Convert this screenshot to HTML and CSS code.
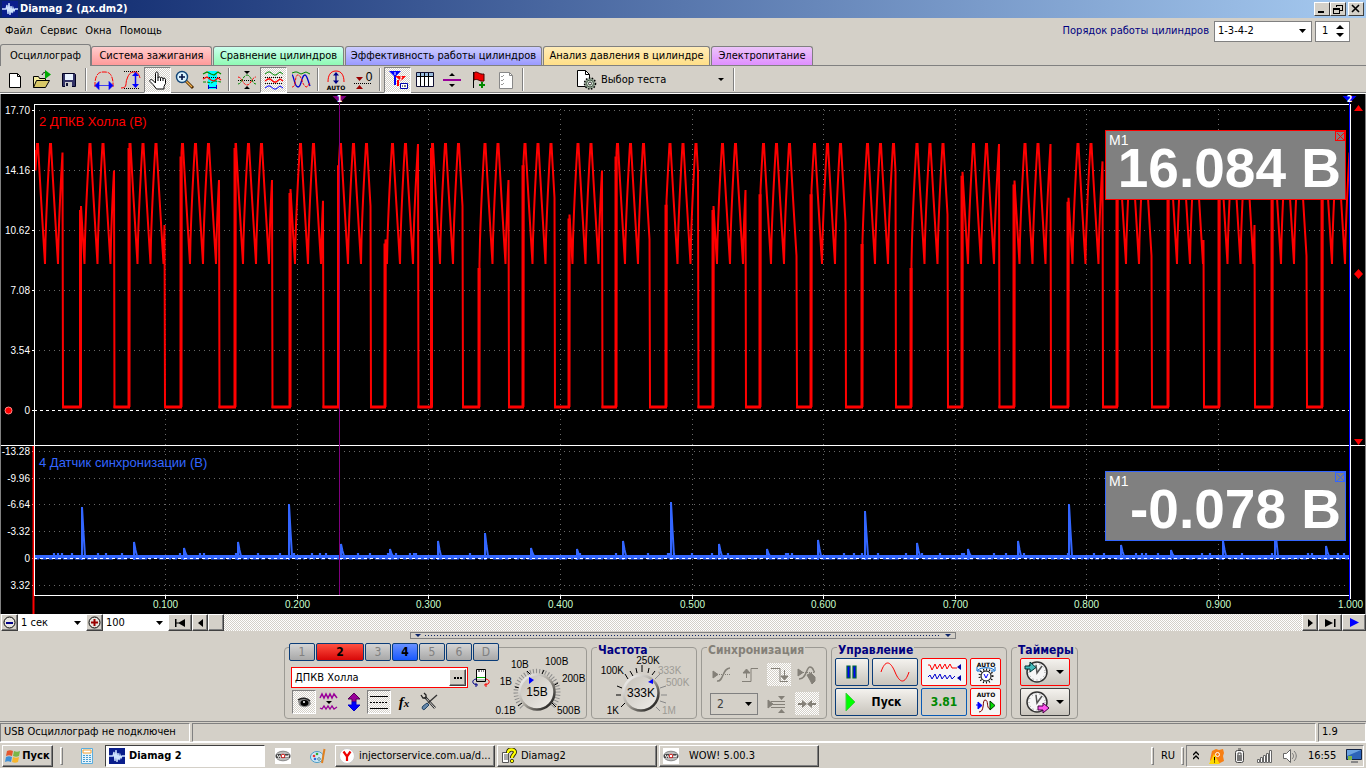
FILE: index.html
```html
<!DOCTYPE html>
<html lang="ru">
<head>
<meta charset="utf-8">
<title>Diamag 2 (дх.dm2)</title>
<link rel="stylesheet" href="styles.css">
</head>
<body>
<svg width="0" height="0" class="defs" aria-hidden="true">
  <defs>
    <symbol id="app" viewBox="0 0 16 16"><rect width="16" height="16" fill="#0a1e8c"/><path d="M0 8h4l1-4 1 9 1-11 1 12 1-9 1 7 1-5 1 3 1-2h3" fill="none" stroke="#cfe4ff" stroke-width="1.3"/></symbol>
    <symbol id="wow" viewBox="0 0 16 16"><rect width="16" height="16" fill="#fff"/><ellipse cx="8" cy="8" rx="7.3" ry="4.8" fill="#bbb" stroke="#888"/><path d="M1 6h14v4H1z" fill="#444"/><path d="M2 6.500l1.500 3 1-2 1 2 1-3M9.500 6.500l1.500 3 1-2 1 2 1-3" stroke="#eee" fill="none"/><circle cx="8" cy="8" r="1.800" fill="#fff" stroke="#d22"/></symbol>
    <linearGradient id="steel" x1="0" y1="0" x2="1" y2="1"><stop offset="0" stop-color="#fff"/><stop offset=".5" stop-color="#a8a49c"/><stop offset="1" stop-color="#000"/></linearGradient>
    <linearGradient id="face" x1="0" y1="0" x2="1" y2="1"><stop offset="0" stop-color="#c4c0b8"/><stop offset="1" stop-color="#f0eeea"/></linearGradient>
  </defs>
</svg>

<header class="titlebar">
  <svg width="16" height="16"><use href="#app"/></svg>
  <h1>Diamag 2 (дх.dm2)</h1>
  <button class="winbtn" aria-label="Свернуть"><svg width="12" height="10"><path d="M2 7h6v2H2z"/></svg></button>
  <button class="winbtn" aria-label="Восстановить"><svg width="12" height="10" fill="none" stroke="#000" shape-rendering="crispEdges"><path d="M4 3V1h6v5H8M4 1h6M1 4h6v5H1zM1 5h6"/></svg></button>
  <button class="winbtn close" aria-label="Закрыть"><svg width="12" height="10"><path d="M2 1l7 7M9 1L2 8" stroke="#000" stroke-width="1.600"/></svg></button>
</header>

<div class="menubar">
  <nav><a href="#">Файл</a><a href="#">Сервис</a><a href="#">Окна</a><a href="#">Помощь</a></nav>
  <label class="order" for="order">Порядок работы цилиндров</label>
  <select id="order" class="combo order-select"><option>1-3-4-2</option></select>
  <div class="spin">
    <input type="text" value="1" aria-label="Номер цилиндра">
    <svg width="10" height="14"><path d="M1 5h8L5 1zM1 9h8l-4 4z"/></svg>
  </div>
</div>

<nav class="tabs">
  <button class="tab active">Осциллограф</button>
  <button class="tab red">Система зажигания</button>
  <button class="tab green">Сравнение цилиндров</button>
  <button class="tab blue">Эффективность работы цилиндров</button>
  <button class="tab yellow">Анализ давления в цилиндре</button>
  <button class="tab violet">Электропитание</button>
</nav>

<div class="toolbar">
  <button class="tool" aria-label="Новый"><svg viewBox="0 0 20 20"><path d="M4.500 3.500h8l3 3v11h-11z" fill="#fff" stroke="#000"/><path d="M12.500 3.500v3h3" fill="none" stroke="#000"/></svg></button>
  <button class="tool" aria-label="Открыть"><svg viewBox="0 0 20 20"><path d="M1.500 17.500v-11h5l1 2h6v3" fill="#f4eca0" stroke="#000"/><path d="M1.500 17.500l3-7h13l-4 7z" fill="#d8c868" stroke="#000"/><path d="M10 5c1-3 4-3 4-1" fill="none" stroke="#000"/><path d="M13 0l6 4.500-6 4.500z" fill="#0a0"/></svg></button>
  <button class="tool" aria-label="Сохранить"><svg viewBox="0 0 20 20"><path d="M3.500 3.500h12l1 1v12h-13z" fill="#336" stroke="#002"/><path d="M6 4h8v6H6z" fill="#e8f2ff"/><path d="M6 12h7v5H6z" fill="#ccc"/><path d="M7 13h2v3H7z" fill="#113"/></svg></button>
  <i class="sep"></i>
  <button class="tool" aria-label="Период"><svg viewBox="0 0 20 20"><path d="M1 17V12C2 4 5 2 9 2h2c4 0 7 2 8 10v5" fill="none" stroke="#f00" stroke-dasharray="5 1"/><path d="M3 15.500h14M1 15.500l4-4v8zM19 15.500l-4-4v8z" fill="#00f" stroke="#00f" stroke-width=".7"/></svg></button>
  <button class="tool" aria-label="Амплитуда"><svg viewBox="0 0 20 20"><path d="M3 1.500h16M3 18.500h16" stroke="#000" stroke-dasharray="1 1"/><path d="M0 18c7 0 4-5 6-9 2-6 4-7 8-7 3 0 4 3 5 6" fill="none" stroke="#f00"/><path d="M14.500 5v11" stroke="#00f" stroke-width="1.500"/><path d="M14.500 2l-3.500 4h7zM14.500 18l-3.500-4h7z" fill="#00f"/></svg></button>
  <button class="tool pressed" aria-label="Рука"><svg viewBox="0 0 20 20"><path d="M7.500 13V3.500c0-2 2.500-2 2.500 0V8c0-1.500 2.500-1.500 2.500.5 0-1.500 2.500-1.500 2.500.5 0-1.500 2.500-1 2.500.5v4l-1.500 3v2.500H8.500L5 14.500l-3-3c-1-1.500 1-2.500 2.500-1.500z" fill="#fff" stroke="#000"/><path d="M10 8v3M12.500 8.500V11M15 9v2" stroke="#000"/></svg></button>
  <button class="tool" aria-label="Увеличить"><svg viewBox="0 0 20 20"><path d="M10.500 10.500L18 18" stroke="#4b2800" stroke-width="3"/><path d="M11 11l6 6" stroke="#f5b24a" stroke-width="1.200"/><circle cx="7" cy="7" r="5.500" fill="#d9f3ff" stroke="#147" stroke-width="1.400"/><path d="M4 7h6M7 4v6" stroke="#014" stroke-width="1.600"/></svg></button>
  <button class="tool" aria-label="Интервал"><svg viewBox="0 0 20 20"><path d="M6 1h9v18H6z" fill="#0ff"/><path d="M1 4l4-2 4 2 3 1 4-3 3 2" fill="none" stroke="#080" stroke-width="1.300"/><path d="M1 7.500h18" stroke="#000" stroke-dasharray="1 1"/><path d="M1 9l4-2 4 3 3 1 4-3 3 2" fill="none" stroke="#f00" stroke-width="1.300"/><path d="M1 12l4 0 4 1 4-2 6 1" fill="none" stroke="#080" stroke-dasharray="3 1"/><path d="M6 17.500h9M6.500 15v4M14.500 15v4" stroke="#00c"/></svg></button>
  <i class="sep"></i>
  <button class="tool" aria-label="Совместить"><svg viewBox="0 0 20 20"><path d="M7 1h6l-3 3zM7 19h6l-3-3z"/><path d="M1 10.500h18" stroke="#000" stroke-dasharray="1 1"/><path d="M1 7c4 0 5 8 9 8s5-8 9-8" fill="none" stroke="#f00" stroke-dasharray="3 1"/><path d="M1 14c4 0 5-9 9-9s5 9 9 9" fill="none" stroke="#080" stroke-dasharray="3 1"/></svg></button>
  <button class="tool pressed" aria-label="Разнести"><svg viewBox="0 0 20 20" fill="none"><path d="M1 4l3-2h2l4 3h2l4-3 3 2" stroke="#080"/><path d="M1 7.500h18M1 13.500h18" stroke="#000" stroke-dasharray="1 1"/><path d="M1 11l3-2h2l4 3h2l4-3 3 2" stroke="#f00" stroke-width="1.300"/><path d="M1 18l3-2h2l4 3h2l4-3 3 2" stroke="#00f"/></svg></button>
  <button class="tool" aria-label="Наложить"><svg viewBox="0 0 20 20" fill="none"><path d="M1 3l3-1h2l4 2 5-2 4 2" stroke="#080"/><path d="M1 5c2 0 2 12 6 12s3-12 7-12c2 0 3 6 5 11" stroke="#00c" stroke-width="1.300"/><path d="M1 17c5 0 2-12 6-12s4 12 9 12l3-4" stroke="#f00" stroke-dasharray="3 1"/></svg></button>
  <i class="sep"></i>
  <button class="tool" aria-label="Авто"><svg viewBox="0 0 20 20"><path d="M2 12C2 6 4 1 10 1s8 5 8 11" fill="none" stroke="#f00"/><path d="M10 4v8" stroke="#008" stroke-width="1.300"/><path d="M10 2L7 5.500h6zM10 14l-3-3.500h6z" fill="#008"/><text x="10" y="20" text-anchor="middle" class="micro">AUTO</text></svg></button>
  <button class="tool" aria-label="Ноль"><svg viewBox="0 0 20 20"><path d="M3 7h7L6.500 11zM3 19h7l-3.500-4z" fill="#900"/><path d="M1 13.500h18" stroke="#000" stroke-dasharray="1 1"/><text x="16" y="11" text-anchor="middle" class="zero">0</text></svg></button>
  <i class="sep"></i>
  <button class="tool pressed" aria-label="Маркеры"><svg viewBox="0 0 20 20"><path d="M1 1h12L7 7zM6 6h2v9H6z" fill="#00f"/><path d="M7 6h11l-5 5zM9 10h2v6H9z" fill="#f00"/><path d="M7 2v3M12 7h2l-2 3h2" stroke="#fff" fill="none"/><path d="M12.500 13.500h7v5h-7z" fill="#fff" stroke="#00a"/><path d="M14 16h1M16 16h2" stroke="#000"/></svg></button>
  <button class="tool" aria-label="Таблица"><svg viewBox="0 0 20 20"><path d="M1.500 2.500h17v14h-17z" fill="#fff" stroke="#113"/><path d="M2 3h16v3H2z" fill="#9bd"/><path d="M2 6.500h16M5.500 3v13M9.500 3v13M13.500 3v13" stroke="#000"/></svg></button>
  <button class="tool" aria-label="Разделить"><svg viewBox="0 0 20 20"><path d="M1 9h18v2H1z" fill="#909"/><path d="M7 6h6l-3-3zM7 14h6l-3 3z"/></svg></button>
  <button class="tool" aria-label="Флаг"><svg viewBox="0 0 20 20"><path d="M4.500 2v16" stroke="#000"/><path d="M5 3c3-3 5 2 10 1v7C10 12 9 8 5 10z" fill="#e00" stroke="#400"/><path d="M13 12v6M10 15h6" stroke="#080" stroke-width="2"/></svg></button>
  <button class="tool" aria-label="Отчёт"><svg viewBox="0 0 20 20"><path d="M3.500 2.500h10l3 3v13h-13z" fill="#fff" stroke="#888"/><path d="M13.500 2.500v3h3" fill="none" stroke="#888"/><path d="M5 6l1 1 2-2M5 10l1 1 2-2M5 14l1 1 2-2" fill="none" stroke="#999"/></svg></button>
  <i class="sep"></i>
  <button class="test"><svg width="22" height="20" viewBox="0 0 22 20"><path d="M1.500.5h8l4 4v12h-12z" fill="#fff" stroke="#000"/><path d="M9.500.5v4h4" fill="none" stroke="#000"/><circle cx="14" cy="13.500" r="5.500" fill="#9a9" stroke="#000" stroke-width="1.500" stroke-dasharray="1.500 1.500"/><circle cx="14" cy="13.500" r="3.500" fill="#cdc" stroke="#454"/><circle cx="14" cy="13.500" r="1.500" fill="#fff" stroke="#333"/></svg><span>Выбор теста</span><svg width="6" height="4"><path d="M0 0h6L3 3z"/></svg></button>
  <i class="sep"></i>
</div>

<main class="scope" id="scope">
  <svg id="plot" width="100%" height="100%"></svg>
  <section class="meter m-red"><span>M1</span><output>16.084 В</output><button aria-label="Закрыть"><svg width="9" height="9"><path d="M1 1l7 7M8 1L1 8" stroke="currentColor"/></svg></button></section>
  <section class="meter m-blue"><span>M1</span><output>-0.078 В</output><button aria-label="Закрыть"><svg width="9" height="9"><path d="M1 1l7 7M8 1L1 8" stroke="currentColor"/></svg></button></section>
</main>

<div class="scroller">
  <button class="raised zoomer" aria-label="Уменьшить"><svg width="13" height="13"><circle cx="6.500" cy="6.500" r="5.500" fill="#e8e6e0" stroke="#000"/><path d="M3 6h7v2H3z" fill="#008"/></svg></button>
  <select class="combo sweep" aria-label="Развёртка"><option>1 сек</option></select>
  <button class="raised zoomer" aria-label="Увеличить"><svg width="13" height="13"><circle cx="6.500" cy="6.500" r="5.500" fill="#e8e6e0" stroke="#000"/><path d="M3 5.500h7v2H3zM5.500 3h2v7h-2z" fill="#900"/></svg></button>
  <select class="combo scale" aria-label="Масштаб"><option>100</option></select>
  <button class="raised jump" aria-label="В начало"><svg width="11" height="8"><path d="M0 0h1.500v8H0zM10 0v8L3 4zM1 3.500h3v1H1z"/></svg></button>
  <button class="raised step" aria-label="Назад"><svg width="5" height="8"><path d="M5 0v8L0 4z"/></svg></button>
  <div class="track"><i class="raised thumb"></i></div>
  <button class="raised step" aria-label="Вперёд"><svg width="5" height="8"><path d="M0 0v8l5-4z"/></svg></button>
  <button class="raised jump" aria-label="В конец"><svg width="11" height="8"><path d="M9 0h1.500v8H9zM0 0v8l8-4z"/></svg></button>
  <button class="raised jump" aria-label="Воспроизвести"><svg width="9" height="9"><path d="M0 0v9l9-4.500z" fill="#00f"/></svg></button>
</div>

<div class="splitter"><div><svg width="6" height="4"><path d="M0 0h6L3 3z"/></svg><i></i><svg width="6" height="4"><path d="M0 0h6L3 3z"/></svg></div></div>

<div class="panels">
  <section class="panel channel">
    <div class="ch-left">
      <div class="channels"><button>1</button><button class="on-red">2</button><button>3</button><button class="on-blue">4</button><button>5</button><button>6</button><button>D</button></div>
      <div class="name-row">
        <div class="name"><input type="text" value="ДПКВ Холла" aria-label="Имя канала"><button class="raised" aria-label="Выбрать"><svg width="8" height="2"><path d="M0 0h2v2H0zM3 0h2v2H3zM6 0h2v2H6z"/></svg></button></div>
        <svg width="18" height="20" viewBox="0 0 18 20"><path d="M4.500 1.500h9v12h-9z" fill="#fff" stroke="#000"/><path d="M6 3h2M9 3h1M11 3h1" stroke="#000"/><path d="M5 9.500h8" stroke="#0a0"/><path d="M5 11h8v2H5z" fill="#bbb"/><path d="M4 11c-5 1-4 6 2 6M4 15v4" fill="none" stroke="#008"/><path d="M14 11c5 1 4 6-2 6M14 15v4" fill="none" stroke="#f00"/></svg>
      </div>
      <div class="ch-tools">
        <button class="pressed" aria-label="Показать"><svg viewBox="0 0 20 20"><path d="M4 9c3-4 9-4 12 0l1 3c-3 4-9 4-12 1z" fill="#888"/><path d="M4 8c4-3 9-2 12 1" fill="none" stroke="#222" stroke-width="1.500"/><ellipse cx="10.500" cy="11" rx="4" ry="3" fill="#000"/><circle cx="10" cy="10" r="1" fill="#fff"/></svg></button>
        <button aria-label="Фильтр"><svg viewBox="0 0 20 20"><path d="M1 6l2-4 2 4 2-4 2 4 2-4 2 4 2-4 3 4" fill="none" stroke="#909" stroke-width="1.500"/><path d="M7 9h6l-3 3z"/><path d="M1 16l2 1 2-3 2 3 2-3 2 3 2-3 2 3 3-2" fill="none" stroke="#909" stroke-width="1.300"/></svg></button>
        <button aria-label="Инвертировать"><svg viewBox="0 0 20 20"><path d="M10 1l6 6h-4v3H8V7H4z" fill="#909" stroke="#505"/><path d="M10 19l6-6h-4v-3H8v3H4z" fill="#00f" stroke="#00c"/></svg></button>
        <button class="pressed" aria-label="Линии"><svg viewBox="0 0 20 20"><path d="M1 4.500h18M1 16.500h18" stroke="#000"/><path d="M1 10.500h18" stroke="#000" stroke-dasharray="2 1"/></svg></button>
        <button aria-label="Функция"><em>f<small>x</small></em></button>
        <button aria-label="Настройки"><svg viewBox="0 0 20 20"><path d="M6 5l10 11" stroke="#222" stroke-width="2.500"/><path d="M6 5l10 11" stroke="#ddd"/><path d="M2 3l2 3h3V3L5 1" fill="none" stroke="#222" stroke-width="1.300"/><path d="M18 3L9 11" stroke="#333" stroke-width="1.300"/><path d="M8 11l-4 3c-2 2 0 5 2 3l4-4z" fill="#68a" stroke="#246"/></svg></button>
      </div>
    </div>
    <svg class="knob volt" width="88" height="62" viewBox="0 0 88 62"><path d="M20 52A21 21 0 1 1 50 52" fill="none" stroke="#8c8c8c" stroke-width="5" stroke-dasharray="1 2"/><path d="M16 51l4-3M13 32l5 1M25 16l4 4M42 15l-3 6M56 28l-5 3M54 52l-4-4" stroke="#000"/><circle cx="35" cy="37" r="17.500" fill="url(#face)" stroke="url(#steel)" stroke-width="2.500"/><path d="M27 22l5 3-5 4z" fill="#00f"/><text x="35" y="41" text-anchor="middle" class="big">15В</text><text x="14" y="59" text-anchor="end">0.1В</text><text x="10" y="30" text-anchor="end">1В</text><text x="9" y="13">10В</text><text x="43" y="10">100В</text><text x="60" y="27">200В</text><text x="55" y="59">500В</text></svg>
  </section>

  <section class="panel freq">
    <h2>Частота</h2>
    <svg class="knob" width="98" height="60" viewBox="0 0 98 60"><path d="M30 50l4-4M25 38h5M26 29l5 2M34 17l3 5M39 14l3 5M45 11l1 5M51 8v7M58 11l-1 5M64 14l-3 4" stroke="#000"/><path d="M69 17l-5 5M75 29l-6 2M76 38h-6M75 46l-6-2M69 54l-4-4" stroke="#888"/><circle cx="50" cy="36" r="17.500" fill="url(#face)" stroke="url(#steel)" stroke-width="2.500"/><path d="M57 25l5-3v5z" fill="#00f"/><text x="50" y="40" text-anchor="middle" class="big">333K</text><text x="28" y="57" text-anchor="end">1K</text><text x="33" y="17" text-anchor="end">100K</text><text x="57" y="7" text-anchor="middle">250K</text><g class="dim"><text x="67" y="17">333K</text><text x="75" y="29">500K</text><text x="71" y="57">1M</text></g></svg>
  </section>

  <section class="panel sync">
    <h2>Синхронизация</h2>
    <div class="sync-grid">
      <div class="sync-row">
        <button disabled aria-label="Уровень"><svg viewBox="0 0 20 20" fill="none" stroke="#848078"><path d="M1 6v7l5-3.500z" fill="#848078"/><path d="M5 9.500h13" stroke-dasharray="1 1"/><path d="M5 16c7 1 5-13 13-13" stroke-width="1.500"/></svg></button>
        <button disabled aria-label="Фронт"><svg viewBox="0 0 20 20" fill="none" stroke="#848078"><path d="M2 16.500h9v-13h7M6.500 13V7"/><path d="M3 8h7L6.500 4z" fill="#848078"/></svg></button>
        <button disabled class="lit" aria-label="Спад"><svg viewBox="0 0 20 20" fill="none" stroke="#848078"><path d="M2 3.500h9v13h8M15.500 5v8"/><path d="M12 11h7l-3.500 4z" fill="#848078"/></svg></button>
        <button disabled aria-label="Ручная"><svg viewBox="0 0 20 20" fill="none" stroke="#848078"><path d="M1 4v7l5-3.500z" fill="#848078"/><path d="M6 7.500h12" stroke-dasharray="1 1"/><path d="M2 14c8 0 7-12 11-12s3 5 5 5" stroke-width="1.500"/><path d="M10 10l4-2 4 4v4l-3 3-2-4z" fill="#848078"/></svg></button>
      </div>
      <div class="sync-row">
        <select disabled class="combo sync-select" aria-label="Канал синхронизации"><option>2</option></select>
        <button disabled aria-label="Зона"><svg viewBox="0 0 20 20" fill="none" stroke="#848078"><path d="M1 6v8l5-4z" fill="#848078"/><path d="M4 7.500h14M6 10.500h12M4 13.500h14"/><path d="M11 2h7l-3.500 4zM11 19h7l-3.500-4z" fill="#848078" stroke="none"/></svg></button>
        <button disabled class="lit" aria-label="Сжать"><svg viewBox="0 0 20 20"><path d="M1 9h4V6l5 4-5 4v-3H1zM19 9h-4V6l-5 4 5 4v-3h4z" fill="#848078"/></svg></button>
      </div>
    </div>
  </section>

  <section class="panel control">
    <h2>Управление</h2>
    <div class="ctl-grid">
      <div class="ctl-row">
        <button class="key w1" aria-label="Пауза"><svg width="12" height="14"><path d="M1 1h3v12H1zM7 1h3v12H7z" fill="#00f" stroke="#063" stroke-width="1.200"/></svg></button>
        <button class="key w2" aria-label="Сигнал"><svg width="30" height="20"><path d="M1 10C5-2 10-2 15 10s10 12 14 0" fill="none" stroke="#f00"/></svg></button>
        <button class="key hot w3" aria-label="Запись"><svg width="36" height="22"><path d="M2 4h2l2 5 3-6 2 5 3-5 2 5 3-5 2 5 3-5 2 4h5" fill="none" stroke="#f00"/><path d="M2 16l2-2 2 4 3-5 2 5 3-5 2 5 3-4 2 4 3-4 2 4 3-3" fill="none" stroke="#00c"/><path d="M35 3v6l-4-3zM35 14v6l-4-3z" fill="#00a"/></svg></button>
        <button class="key hot w4" aria-label="Авто диапазон"><svg width="20" height="23"><text x="10" y="6" text-anchor="middle" class="micro">AUTO</text><path d="M2 9c3-3 13-3 16 0M1 6v4h4M19 6v4h-4" fill="none" stroke="#06c"/><circle cx="10" cy="15" r="6.500" fill="none" stroke="#000" stroke-width="2" stroke-dasharray="1 2"/><circle cx="10" cy="15" r="5" fill="#fff" stroke="#000"/><path d="M8 13l2 4 2-4" fill="none" stroke="#00f"/></svg></button>
      </div>
      <div class="ctl-row">
        <button class="key play"><svg width="11" height="20"><path d="M1 1v18l9-9z" fill="#0f0" stroke="#4c4"/></svg><span>Пуск</span></button>
        <output class="key rate w3">3.81</output>
        <button class="key hot w4" aria-label="Авто пуск"><svg width="20" height="23"><text x="10" y="6" text-anchor="middle" class="micro">AUTO</text><path d="M0 14h3M2 11l4 3.500-4 3.500z" fill="#00f" stroke="#00f"/><path d="M3 21c6 0 3-12 6-12 4 0 1 8 5 9" fill="none" stroke="#700"/><path d="M14 10v9l5-4.500z" fill="#0d0" stroke="#030"/></svg></button>
      </div>
    </div>
  </section>

  <section class="panel timers">
    <h2>Таймеры</h2>
    <button class="key hot timer" aria-label="Таймер пуска"><svg width="26" height="24"><circle cx="13" cy="12" r="10" fill="#f6f6f6" stroke="#333" stroke-width="1.500"/><circle cx="13" cy="12" r="8" fill="none" stroke="#888" stroke-dasharray="1 3"/><path d="M12 5l1 8 5-7" fill="none" stroke="#555" stroke-width="1.500"/><path d="M1 6h5V2l6 5.500L6 12V9H1z" fill="#4bb" stroke="#033"/></svg><svg width="8" height="5"><path d="M0 0h8L4 4z"/></svg></button>
    <button class="key timer dark" aria-label="Таймер остановки"><svg width="26" height="24"><circle cx="13" cy="12" r="10" fill="#f6f6f6" stroke="#333" stroke-width="1.500"/><circle cx="13" cy="12" r="8" fill="none" stroke="#888" stroke-dasharray="1 3"/><path d="M12 5l1 8 5-7" fill="none" stroke="#555" stroke-width="1.500"/><path d="M14 16h5v-3l6 5-6 5v-3h-5z" fill="#f5e" stroke="#404"/></svg><svg width="8" height="5"><path d="M0 0h8L4 4z"/></svg></button>
  </section>
</div>

<footer class="status"><div class="s1">USB Осциллограф не подключен</div><div class="s2"></div><div class="s3">1.9</div></footer>

<div class="taskbar">
  <button class="raised start"><svg width="16" height="14"><path d="M2 2c2-1 4-1 6 0L7 7C5 6 3 6 1 7z" fill="#e4572e"/><path d="M9 2c2 1 4 1 6 0l-1 5c-2 1-4 1-6 0z" fill="#7ab648"/><path d="M1 8c2-1 4-1 6 0l-1 5c-2-1-4-1-6 0z" fill="#3d8fd6"/><path d="M8 8c2 1 4 1 6 0l-1 5c-2 1-4 1-6 0z" fill="#f7b52c"/></svg>Пуск</button>
  <i class="grip"></i>
  <a href="#" class="quick q1" aria-label="Калькулятор"><svg width="12" height="16"><path d="M.5.5h11v15H.5z" fill="#e6f4fc" stroke="#5aaede"/><path d="M2 2h8v3H2z" fill="#fff" stroke="#f7a030"/><path d="M2 7.500h8M2 9.500h8M2 11.500h8M2 13.500h8" stroke="#4a9cd0" stroke-dasharray="2 1"/></svg></a>
  <button class="task current"><svg width="16" height="16"><use href="#app"/></svg>Diamag 2</button>
  <a href="#" class="quick q2" aria-label="WOW"><svg width="16" height="16"><use href="#wow"/></svg></a>
  <a href="#" class="quick q3" aria-label="Paint"><svg width="16" height="16"><ellipse cx="7" cy="9" rx="6.500" ry="5.500" fill="#cfe8f6" stroke="#4a9cc8"/><circle cx="4" cy="8" r="1.300" fill="#e33"/><circle cx="7" cy="6" r="1.300" fill="#3a3"/><circle cx="5" cy="11" r="1.300" fill="#36d"/><circle cx="9" cy="11" r="1.300" fill="#fff" stroke="#489"/><path d="M14.500 1L12 15" stroke="#e08020" stroke-width="2"/></svg></a>
  <button class="raised task"><svg width="16" height="16"><circle cx="8" cy="8" r="7.500" fill="#fff" stroke="#ccc"/><path d="M4.500 3.500L8 8.500l3.500-5M8 8v5" fill="none" stroke="#e00" stroke-width="2.200"/></svg>injectorservice.com.ua/d...</button>
  <button class="raised task"><svg width="16" height="16"><path d="M1.500 4.500h6v10h-6z" fill="#fff" stroke="#555"/><path d="M3 7h4M3 9h4M3 11h4" stroke="#555"/><path d="M7 5c0-5 7-4 7-1 0 2-3 3-3 6" fill="none" stroke="#220" stroke-width="4"/><path d="M7 5c0-5 7-4 7-1 0 2-3 3-3 6" fill="none" stroke="#ff0" stroke-width="2.300"/><circle cx="11" cy="13" r="1.700" fill="#ff0" stroke="#220" stroke-width=".8"/></svg>Diamag2</button>
  <button class="raised task wide-gap"><svg width="16" height="16"><use href="#wow"/></svg>WOW! 5.00.3</button>
  <span class="fill"></span>
  <i class="grip"></i><span class="lang">RU</span><i class="grip"></i>
  <div class="tray">
    <svg width="6" height="10"><path d="M0 4l3-3 3 3M0 8l3-3 3 3" fill="none" stroke="#000" stroke-width="1.300"/></svg>
    <svg width="16" height="16"><path d="M3 3l4-2 3 1 4-1 1 4-1 3 1 5-4 2H3L1 12z" fill="#f77f14"/><circle cx="8.500" cy="6.500" r="2" fill="none" stroke="#fff"/><path d="M5 6l6 10H0z" fill="#ffd800"/><path d="M5.500 9v3.500M5.500 13.500v1" stroke="#000"/></svg>
    <svg width="12" height="16"><rect x="1.500" y="2.500" width="8" height="12" rx="2" fill="#f4f4f4" stroke="#444"/><path d="M4 1h3M4 5h3v3H4z" stroke="#444" fill="none"/><path d="M3 7h5v6H3z" fill="#777"/></svg>
    <svg width="17" height="14"><path d="M1.500 13.500v-3h2v3zM4.500 13.500v-5h2v5zM7.500 13.500v-7h2v7zM10.500 13.500v-9h2v9zM13.500 13.500v-12h2v12z" fill="#fff" stroke="#666"/></svg>
    <svg width="16" height="16"><path d="M1.500 5.500h3l4-4v13l-4-4h-3z" fill="#fff" stroke="#666"/><path d="M10 5c2 2 2 4 0 6M12 3c3 3 3 7 0 10" fill="none" stroke="#777"/></svg>
    <time>16:55</time>
    <svg width="16" height="14"><path d="M.5.5h15v10H.5z" fill="#2c64b8" stroke="#124"/><path d="M1 1h14L1 7z" fill="#6ba3e0"/><path d="M2 7h4v4H2z" fill="#7ab648"/><path d="M5 12h7v2H5z" fill="#888"/></svg>
  </div>
</div>
<script src="plot.js"></script>
</body>
</html>
```
FILE: styles.css
```css
* { box-sizing: border-box; }
html, body { margin: 0; height: 100%; }
body {
  display: flex; flex-direction: column; min-height: 100vh;
  background: #d4d0c8; color: #000;
  font: 11px/14px "DejaVu Sans Condensed", "Liberation Sans", sans-serif;
}
button, input, select, output { font: inherit; color: inherit; }
button { padding: 0; margin: 0; border: 0; background: none; display: flex; align-items: center; justify-content: center; }
a { color: inherit; text-decoration: none; }
svg { display: block; flex: none; }
.defs { position: absolute; }
h1, h2 { margin: 0; font-size: 11px; line-height: 14px; }
.micro { font: 6px "DejaVu Sans", sans-serif; font-weight: bold; }
.zero { font: 12px "Liberation Sans", sans-serif; }

.raised { background: #d4d0c8; border: 1px solid; border-color: #fff #404040 #404040 #fff; box-shadow: inset -1px -1px #808080; }
.pressed, .lit { background: repeating-conic-gradient(#fff 0 25%, #d4d0c8 0 50%) 0 0 / 2px 2px; }
.pressed { border: 1px solid; border-color: #808080 #fff #fff #808080; }

.titlebar { display: flex; align-items: center; height: 18px; padding: 0 2px; background: linear-gradient(90deg, #0a246a, #a6caf0); color: #fff; }
.titlebar h1 { flex: 1; padding-left: 2px; }
.winbtn { width: 16px; height: 14px; background: #d4d0c8; border: 1px solid; border-color: #fff #404040 #404040 #fff; }
.winbtn.close { margin-left: 2px; }

.menubar { display: flex; align-items: center; height: 26px; padding: 0 16px 0 5px; }
.menubar nav { flex: 1; display: flex; gap: 8px; }
.order { color: #000080; margin-right: 5px; }
.combo {
  appearance: none; height: 21px; padding: 0 16px 0 3px; border: 1px solid #808080; border-radius: 0;
  background: #fff url("data:image/svg+xml,%3Csvg xmlns='http://www.w3.org/2000/svg' width='7' height='4'%3E%3Cpath d='M0 0h7L3.500 4z'/%3E%3C/svg%3E") no-repeat right 5px center;
}
.order-select { width: 98px; margin-right: 3px; }
.spin { display: flex; align-items: center; width: 35px; height: 21px; border: 1px solid #808080; background: #fff; }
.spin input { width: 19px; border: 0; padding: 0 0 0 6px; background: none; }

.tabs { display: flex; align-items: flex-end; height: 22px; gap: 1px; border-bottom: 1px solid #808080; }
.tab { height: 19px; border: 1px solid #808080; border-bottom: 0; border-radius: 3px 3px 0 0; padding: 0; white-space: nowrap; }
.tab.active { width: 91px; height: 22px; margin: 0 -1px -1px 0; background: #d4d0c8; }
.tab.red { width: 121px; background: linear-gradient(#fcc, #ff9a9a); }
.tab.green { width: 131px; background: linear-gradient(#cfe, #8ffab4); }
.tab.blue { width: 197px; background: linear-gradient(#ccf, #9a9aff); }
.tab.yellow { width: 167px; background: linear-gradient(#ffecb8, #ffdf88); }
.tab.violet { width: 102px; background: linear-gradient(#ecc4fa, #df8fff); }

.toolbar { display: flex; align-items: center; height: 28px; padding-left: 1px; border-bottom: 1px solid #fff; box-shadow: inset 0 -1px #808080; }
.tool { width: 27px; height: 26px; }
.tool svg { width: 20px; height: 20px; }
.sep { width: 2px; height: 23px; margin: 0 3px; border-left: 1px solid #808080; border-right: 1px solid #fff; flex: none; }
.test { width: 156px; height: 24px; margin-left: 45px; margin-right: 2px; padding: 0 4px; gap: 3px; }
.test span { flex: 1; text-align: left; }

.scope { position: relative; flex: 1 1 0; min-height: 300px; background: #000; border-left: 1px solid #808080; border-right: 1px solid #808080; overflow: hidden; }
#plot { position: absolute; inset: 0; }
#plot text { font: 10px "Liberation Sans", sans-serif; }
#plot .caption { font-size: 13px; }
#plot .tag { font: bold 8px "DejaVu Sans", sans-serif; }
.meter { position: absolute; right: 19px; width: 241px; height: 70px; background: #808080; border: 1px solid; color: #fff; }
.m-red { top: 7%; border-color: #f00; }
.m-blue { top: 72.5%; border-color: #36f; }
.meter span { position: absolute; left: 3px; top: 1px; font: 14px/16px "Liberation Sans", sans-serif; }
.meter output { display: block; text-align: right; padding-right: 4px; font: bold 55px/74px "Liberation Sans", sans-serif; }
.meter button { position: absolute; right: 0; top: 0; width: 10px; height: 10px; border: 1px solid; color: #f00; }
.m-blue button { color: #36f; }

.scroller { display: flex; height: 18px; }
.zoomer { width: 17px; height: 17px; }
.zoomer:first-child { margin-left: 1px; }
.scroller .combo { height: 17px; border: 0; }
.scroller .sweep { width: 68px; }
.scroller .scale { width: 65px; }
.scroller .jump { width: 24px; height: 17px; }
.scroller .step { width: 16px; height: 17px; }
.track { flex: 1; height: 17px; background: repeating-conic-gradient(#fff 0 25%, #d4d0c8 0 50%) 0 0 / 2px 2px; }
.thumb { display: block; width: 16px; height: 17px; }
.splitter { display: flex; justify-content: center; height: 7px; }
.splitter div { display: flex; align-items: center; justify-content: space-between; width: 40%; height: 7px; padding: 0 4px; border: 1px solid #808080; fill: #0a246a; }
.splitter i { flex: 1; height: 1px; margin: 0 4px; background: repeating-linear-gradient(90deg, #0a246a 0 1px, transparent 1px 3px); }

.panels { display: flex; justify-content: center; gap: 4px; height: 83px; padding: 4px 4px 2px 0; border-bottom: 1px solid #808080; }
.panel { position: relative; z-index: 0; height: 76px; }
.panel::before { content: ""; position: absolute; z-index: -1; inset: 4px 0 0; border: 1px solid #9c9a94; border-radius: 4px; }
.panel h2 { width: max-content; margin-left: 6px; padding: 0 1px; background: #d4d0c8; color: #000080; font-size: 12px; }
.channel { display: flex; width: 303px; padding-left: 5px; }
.ch-left { width: 210px; }
.channels { display: flex; gap: 1px; height: 18px; background: #d4d0c8; }
.channels button { width: 26px; height: 18px; border: 1px solid #0a3c78; border-radius: 2px; background: linear-gradient(#d4d4d4, #a8a8a8); color: #808080; font-size: 12px; }
.channels .on-red { width: 48px; background: linear-gradient(#ff5040, #d80808); color: #000; font-weight: bold; }
.channels .on-blue { background: linear-gradient(#6890ff, #1858ff); color: #000; font-weight: bold; }
.name-row { display: flex; align-items: center; gap: 4px; margin: 6px 0 2px 2px; }
.name { display: flex; width: 177px; height: 21px; border: 1px solid #f00; background: #fff; }
.name input { flex: 1; min-width: 0; border: 0; padding: 0 3px; background: none; }
.name button { width: 17px; height: 17px; margin: 1px; }
.ch-tools { display: flex; gap: 1px; margin-left: 3px; }
.ch-tools button { width: 24px; height: 24px; }
.ch-tools svg { width: 20px; height: 20px; }
.ch-tools em { font: italic bold 15px "Liberation Serif", serif; }
.ch-tools small { font-size: 11px; }
.knob { overflow: visible; font: 10px "Liberation Sans", sans-serif; }
.knob .big { font-size: 12px; }
.knob .dim { fill: #9c9a94; }
.volt { margin: 12px 0 0 3px; }
.freq { width: 106px; }
.sync { width: 126px; }
.sync h2 { color: #848078; }
.sync-grid { padding: 3px 8px 0 9px; }
.sync-row { display: flex; justify-content: space-between; align-items: center; height: 29px; }
.sync button { width: 24px; height: 23px; }
.sync svg { width: 20px; height: 20px; }
.sync .combo { width: 48px; height: 22px; padding-left: 6px; background-color: #d4d0c8; color: #404040; opacity: 1; font-size: 12px; }
.control { width: 176px; }
.ctl-grid { display: grid; gap: 2px; padding: 1px 4px 0; }
.ctl-row { display: flex; gap: 3px; }
.key { height: 28px; border: 1px solid #0a3c78; border-radius: 2px; background: linear-gradient(#f4f2ee, #c8c4bc); }
.key.hot { border-color: #f00; background: #f6f6f6; }
.w1 { width: 34px; }
.w2 { width: 46px; }
.w3 { width: 46px; }
.w4 { width: 31px; }
.play { width: 83px; justify-content: flex-start; padding-left: 9px; font-weight: bold; font-size: 12px; }
.play span { flex: 1; text-align: center; }
.rate { display: flex; align-items: center; justify-content: center; background: #d4d0c8; border-color: #0a5ab4; color: #080; font-weight: bold; font-size: 12px; }
.timers { width: 67px; }
.timers .timer { width: 50px; margin: 1px 0 2px 9px; gap: 6px; padding-right: 2px; }
.key.timer { background: linear-gradient(#f4f2ee, #c8c4bc); }
.key.dark { border-color: #404040; }

.status { display: flex; gap: 2px; height: 20px; padding-top: 1px; }
.status div { border: 1px solid; border-color: #808080 #fff #fff #808080; padding: 1px 3px; }
.s1 { width: 190px; white-space: nowrap; }
.s2 { flex: 1; }
.s3 { width: 48px; }

.taskbar { display: flex; align-items: center; height: 26px; padding: 1px 2px 0; border-top: 1px solid #fff; }
.start { width: 51px; height: 22px; font-weight: bold; gap: 1px; }
.grip { width: 3px; height: 18px; margin: 0 7px; border: 1px solid; border-color: #fff #808080 #808080 #fff; }
.quick { display: block; }
.q1 { margin: 0 12px 0 11px; }
.q2 { margin: 0 10px; }
.q3 { margin: 0 9px; }
.task { width: 160px; height: 22px; margin-right: 2px; padding: 0 3px; gap: 4px; justify-content: flex-start; white-space: nowrap; }
.task.current { margin-right: 0; background: #fff; border: 1px solid; border-color: #404040 #fff #fff #404040; font-weight: bold; }
.wide-gap { gap: 10px; }
.fill { flex: 1; }
.lang + .grip { margin: 0 2px 0 6px; }
.tray { display: flex; align-items: center; justify-content: space-between; width: 178px; height: 22px; padding: 0 1px 0 6px; border: 1px solid; border-color: #808080 #fff #fff #808080; }
```
FILE: plot.js
```js
// Each tooth of the hall sensor: [rise, first peak, fall].
// Horizontal units run from 34 (0 s) to 1350 (1 s).
const T0 = 34, T1 = 1350;
const teeth = [
  [35, 37, 63], [80.5, 89.5, 114.5], [129, 129.5, 165], [181, 182, 219.5], [235, 235, 272.5],
  [290, 300, 323.5], [338.5, 340, 371], [385, 392, 418.5], [431.5, 432, 463], [479, 484.5, 509],
  [523, 524.5, 555], [569, 577.5, 602.5], [616, 617, 650], [666, 669.5, 698.5], [713, 722, 746],
  [760, 763, 797], [811, 814, 846], [862, 867, 896], [911, 916.5, 948], [962, 973, 999.5],
  [1014, 1024.5, 1051], [1068, 1077.5, 1103], [1117, 1118, 1152], [1168, 1169, 1204],
  [1219, 1219.5, 1255], [1272, 1273, 1307], [1322, 1324, 1350]
];
// Spikes of the sync sensor: [time, top].
const spikes = [
  [82, 507], [134, 542], [184, 548], [238, 542], [289, 504], [341, 544], [390, 549], [438, 541],
  [485, 533], [531, 548], [577, 549], [623, 541], [671, 502], [719, 544], [767, 549], [818, 540],
  [865, 511], [917, 543], [968, 549], [1018, 541], [1069, 504], [1121, 545], [1171, 550],
  [1223, 541], [1275, 525], [1326, 546]
];

// Ringing of the hall signal: slow decay, quick return.
function ring(t, peak) {
  const period = 13, top = 144, bottom = 264;
  const p = (((t - peak) % period) + period) % period;
  if (p < 1) return top;
  if (p < 8) return top + (bottom - top) * Math.pow((p - 1) / 7, 0.95);
  return bottom - (bottom - top) * Math.pow((p - 8) / 5, 0.7);
}

function draw() {
  const box = document.getElementById('scope');
  const W = box.clientWidth, H = box.clientHeight;
  const left = 33, right = W - 15;
  const k = H / 520;
  const X = t => left + (t - T0) / (T1 - T0) * (right - left);
  const Y = y => (y - 94) * k;
  const R = v => Math.round(v) + 0.5;
  const out = [];
  const line = (x1, y1, x2, y2, c, extra = '') =>
    out.push(`<line x1="${x1}" y1="${y1}" x2="${x2}" y2="${y2}" stroke="${c}" ${extra}/>`);
  const text = (x, y, s, c, anchor = 'start', cls = '') =>
    out.push(`<text x="${x}" y="${y}" fill="${c}" text-anchor="${anchor}" class="${cls}">${s}</text>`);

  const rows = [[110, '17.70'], [170, '14.16'], [230, '10.62'], [290, '7.08'], [350, '3.54'], [410, '0'],
    [451, '-13.28'], [478, '-9.96'], [504, '-6.64'], [531, '-3.32'], [558, '0'], [585, '3.32']];
  for (const [y, label] of rows) {
    const yy = R(Y(y));
    if (label !== '0') line(left, yy, right, yy, '#686868', 'stroke-dasharray="1 4"');
    line(left - 2, yy, left, yy, '#fff');
    text(left - 4, yy + 3, label, '#fff', 'end');
  }
  for (let i = 1; i <= 10; i++) {
    const x = R(X(T0 + i * 131.6) - 0.5);
    if (i < 10) line(x, Y(109), x, Y(595), '#686868', 'stroke-dasharray="1 4"');
    line(x, Y(595), x, Y(599), '#fff');
    text(x, Y(608), (i / 10).toFixed(3), '#cfc', 'middle');
  }

  // hall sensor
  let d = '', slabs = '';
  teeth.forEach(([rise, peak, fall], i) => {
    d += (i ? 'L' : 'M') + X(rise) + ' ' + Y(i ? 407 : 150);
    for (let t = rise + 0.5; t < fall; t += 0.5) d += 'L' + X(t).toFixed(1) + ' ' + Y(ring(t, peak)).toFixed(1);
    const next = teeth[i + 1];
    if (next) {
      d += `L${X(fall)} ${Y(407)}L${X(next[0])} ${Y(407)}`;
      slabs += `M${X(fall) - 1} ${Y(407)}H${X(next[0]) + 1}`;
      slabs += `M${X(next[0])} ${Y(407)}V${Y(ring(next[0] + 0.5, next[1])) + 4}`;
    }
  });
  out.push(`<path d="${d}" fill="none" stroke="#f00" stroke-width="2"/>`);
  out.push(`<path d="${slabs}" fill="none" stroke="#f00" stroke-width="3"/>`);
  line(left, R(Y(410)), right, R(Y(410)), '#fff', 'stroke-dasharray="3 3"');

  // sync sensor with a little noise along the baseline
  let seed = 7;
  const rnd = () => (seed = (seed * 16807) % 2147483647) / 2147483647;
  let b = '';
  for (let t = T0; t < T1; t += 2) {
    const h = rnd() > 0.9 ? 2 : 0;
    b += `M${X(t).toFixed(1)} ${Y(555) - h}V${Y(558.5) + (rnd() > 0.7 ? 0 : 1)}`;
  }
  out.push(`<path d="${b}" stroke="#36f" stroke-width="2.2"/>`);
  const s = spikes.map(([t, y]) =>
    `M${X(t)} ${Y(560)}V${Y(y)}L${X(t) + 1.5} ${Y(y + (558 - y) * 0.5)}L${X(t) + 3} ${Y(556)}`).join('');
  out.push(`<path d="${s}" fill="none" stroke="#36f" stroke-width="2"/>`);
  line(left, R(Y(558)), right, R(Y(558)), '#fff', 'stroke-dasharray="3 3"');

  // frame
  line(left - 0.5, Y(446), left - 0.5, H, '#f00', 'stroke-width="2"');
  line(0, R(Y(445)), W, R(Y(445)), '#fff');
  line(left, R(Y(104)), right, R(Y(104)), '#fff');
  line(left, R(Y(595)), right, R(Y(595)), '#fff');
  line(left + 0.5, Y(104), left + 0.5, Y(595), '#fff');
  line(right + 0.5, Y(104), right + 0.5, Y(595), '#fff');

  // time markers
  const m1 = R(X(338.5)), m2 = right - 0.5;
  line(m1, Y(96), m1, Y(595), '#800080');
  line(m2, Y(96), m2, Y(600), '#00f');
  for (const [x, c, n] of [[m1, '#800080', 1], [m2, '#00f', 2]]) {
    out.push(`<path d="M${x - 7} ${Y(96)}h14l-7 7z" fill="${c}"/>`);
    text(x, Y(102), n, '#fff', 'middle', 'tag');
  }

  // level handles
  const e = W - 7;
  out.push(`<path d="M${e - 4} ${Y(111)}h9l-4.500 -6zM${e - 4} ${Y(439)}h9l-4.500 6zM${e - 4} ${Y(274)}l4.500 -5l4.500 5l-4.500 5z" fill="#f00"/>`);
  out.push(`<circle cx="7.500" cy="${R(Y(410))}" r="3.500" fill="#f00" stroke="#f88"/>`);
  text(38, Y(126), '2 ДПКВ Холла (В)', '#f00', 'start', 'caption');
  text(38, Y(467), '4 Датчик синхронизации (В)', '#36f', 'start', 'caption');
  document.getElementById('plot').innerHTML = out.join('');
}
draw();
addEventListener('resize', draw);
```
